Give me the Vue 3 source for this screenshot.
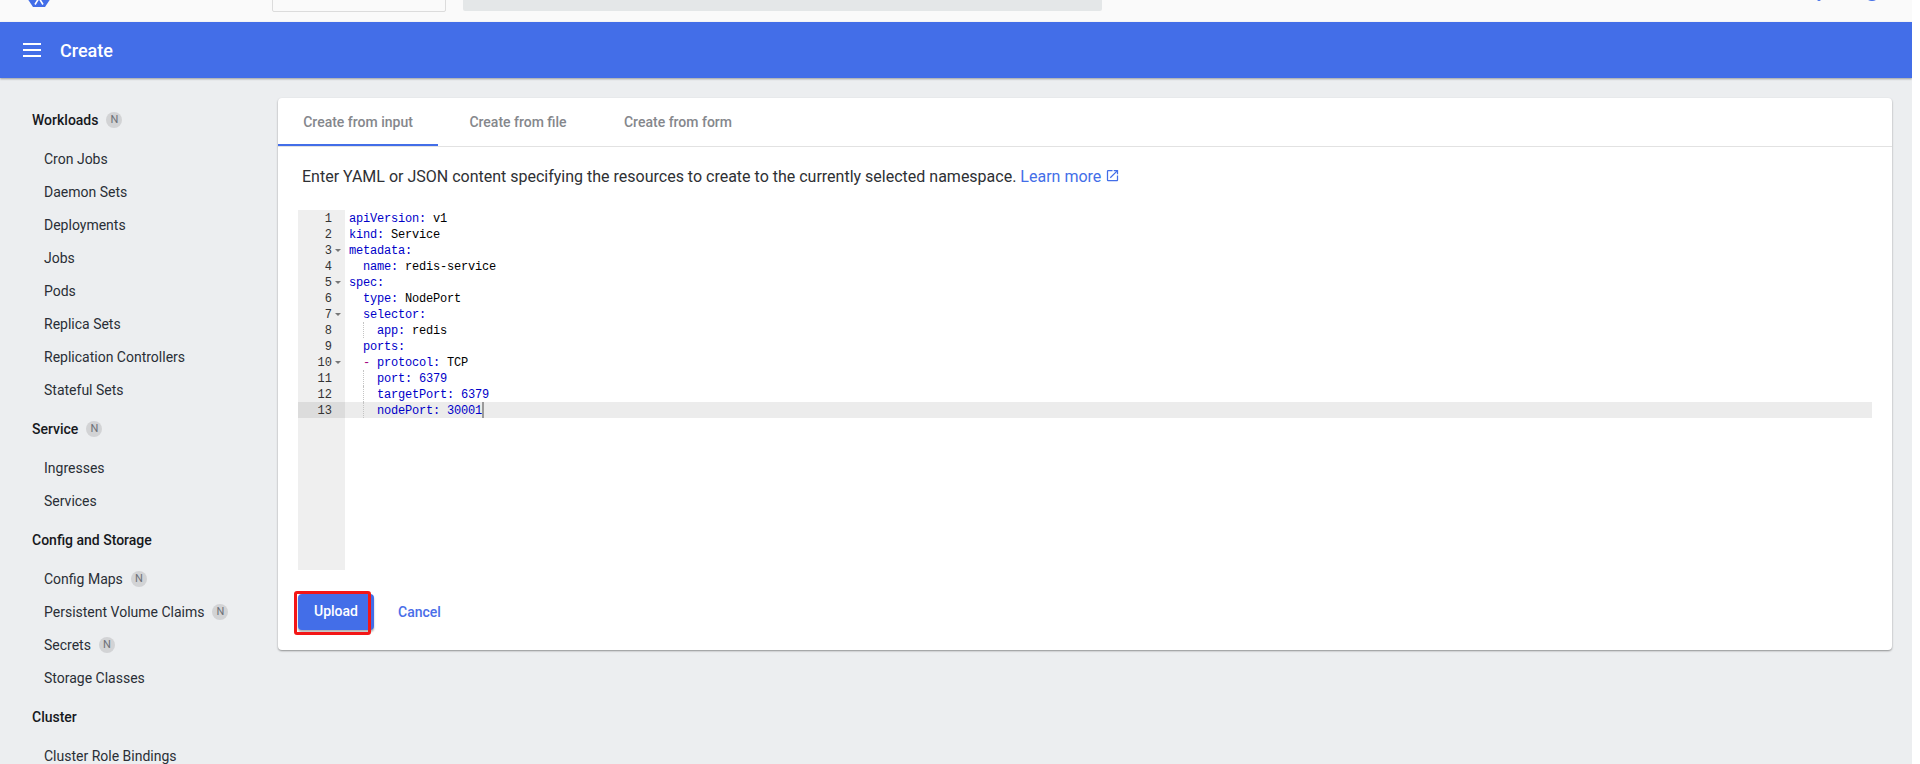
<script setup>
const groups = [
  { title: 'Workloads', badge: true, items: [
    { label: 'Cron Jobs' }, { label: 'Daemon Sets' }, { label: 'Deployments' }, { label: 'Jobs' },
    { label: 'Pods' }, { label: 'Replica Sets' }, { label: 'Replication Controllers' }, { label: 'Stateful Sets' }
  ] },
  { title: 'Service', badge: true, items: [{ label: 'Ingresses' }, { label: 'Services' }] },
  { title: 'Config and Storage', badge: false, items: [
    { label: 'Config Maps', badge: true }, { label: 'Persistent Volume Claims', badge: true },
    { label: 'Secrets', badge: true }, { label: 'Storage Classes' }
  ] },
  { title: 'Cluster', badge: false, items: [{ label: 'Cluster Role Bindings' }] }
]

const tabs = ['Create from input', 'Create from file', 'Create from form']

const lines = [
  { indent: '', key: 'apiVersion', value: 'v1' },
  { indent: '', key: 'kind', value: 'Service' },
  { indent: '', key: 'metadata', fold: true },
  { indent: '  ', key: 'name', value: 'redis-service' },
  { indent: '', key: 'spec', fold: true },
  { indent: '  ', key: 'type', value: 'NodePort' },
  { indent: '  ', key: 'selector', fold: true },
  { indent: '    ', key: 'app', value: 'redis', guide: true },
  { indent: '  ', key: 'ports' },
  { indent: '  ', dash: true, key: 'protocol', value: 'TCP', fold: true },
  { indent: '    ', key: 'port', num: '6379', guide: true },
  { indent: '    ', key: 'targetPort', num: '6379', guide: true },
  { indent: '    ', key: 'nodePort', num: '30001', guide: true, active: true }
]
</script>

<template>
  <div class="app">
    <div class="topbar">
      <svg class="logo" width="24" height="24" viewBox="0 0 24 24">
        <path d="M12 0 22 5 24 15 18 24H6L0 15 2 5Z" fill="#436ee8" />
        <path d="M8 21.500 12 15l4 6.500" fill="none" stroke="#fff" stroke-width="1.600" />
      </svg>
      <div class="search"></div>
      <div class="actionbar"></div>
      <div class="top-icons">
        <span class="dot"></span>
        <span class="avatar"></span>
      </div>
    </div>

    <header class="toolbar">
      <svg class="menu" width="18" height="14" viewBox="0 0 18 14">
        <path d="M0 1h18M0 7h18M0 13h18" stroke="#fff" stroke-width="2" />
      </svg>
      <span class="title">Create</span>
    </header>

    <div class="body">
      <nav class="sidebar">
        <section v-for="group in groups" :key="group.title" class="group">
          <div class="group-title">
            {{ group.title }}
            <span v-if="group.badge" class="badge">N</span>
          </div>
          <div v-for="item in group.items" :key="item.label" class="item">
            {{ item.label }}
            <span v-if="item.badge" class="badge">N</span>
          </div>
        </section>
      </nav>

      <main class="main">
        <div class="card">
          <div class="tabs">
            <div v-for="(tab, i) in tabs" :key="tab" class="tab" :class="{ on: i === 0 }">{{ tab }}</div>
          </div>
          <div class="content">
            <p class="desc">
              Enter YAML or JSON content specifying the resources to create to the currently selected namespace.
              <a class="learn">Learn more
                <svg width="15" height="15" viewBox="0 0 24 24"><path fill="#436ee8" d="M19 19H5V5h7V3H5a2 2 0 0 0-2 2v14a2 2 0 0 0 2 2h14c1.100 0 2-.9 2-2v-7h-2v7zM14 3v2h3.590l-9.830 9.830 1.410 1.410L19 6.410V10h2V3h-7z" /></svg>
              </a>
            </p>
            <div class="editor">
              <div class="gutter">
                <div v-for="(l, i) in lines" :key="i" class="gline" :class="{ active: l.active }">
                  <span>{{ i + 1 }}</span>
                  <i class="fold" :class="{ show: l.fold }"></i>
                </div>
              </div>
              <div class="code">
                <div v-for="(l, i) in lines" :key="i" class="cline" :class="{ active: l.active, guide: l.guide }"><span>{{ l.indent }}</span><span v-if="l.dash" class="dash">{{ '- ' }}</span><span class="key">{{ l.key }}:</span><span v-if="l.value">{{ ' ' + l.value }}</span><span v-if="l.num" class="key">{{ ' ' + l.num }}</span><i v-if="l.active" class="caret"></i></div>
              </div>
            </div>
            <div class="actions">
              <button class="upload">Upload<span class="mark"></span></button>
              <button class="cancel">Cancel</button>
            </div>
          </div>
        </div>
      </main>
    </div>
  </div>
</template>

<style>
html, body { background: #fff; overflow: hidden; }
</style>

<style scoped>
.app {
  width: 1912px;
  height: 764px;
  display: flex;
  flex-direction: column;
  overflow: hidden;
  background: #eceef0;
  font-family: Roboto, "Liberation Sans", sans-serif;
}
.topbar {
  height: 22px;
  flex: none;
  background: #fafafa;
  display: flex;
  align-items: flex-end;
  overflow: hidden;
}
.logo { flex: none; margin: 0 0 15px 27px; }
.search {
  flex: none;
  width: 174px;
  height: 48px;
  margin: 0 0 10px 221px;
  background: #fafafa;
  border: 1px solid #dcdcdc;
  border-radius: 2px;
  box-sizing: border-box;
}
.actionbar {
  flex: none;
  width: 639px;
  height: 48px;
  margin: 0 0 11px 17px;
  background: #e4e7e8;
  border-radius: 2px;
}
.top-icons {
  flex: none;
  display: flex;
  align-items: flex-end;
  margin: 0 0 21px 715px;
}
.dot { width: 4px; height: 4px; border-radius: 50%; background: #436ee8; }
.avatar { width: 16px; height: 16px; border-radius: 50%; background: #436ee8; margin-left: 43px; }
.toolbar {
  height: 56px;
  flex: none;
  display: flex;
  align-items: center;
  background: #436ee8;
  color: #fff;
  box-shadow: 0 1px 2px rgba(0, 0, 0, .35);
  position: relative;
  z-index: 1;
}
.menu { margin-left: 23px; }
.title { margin-left: 19px; font-size: 18px; font-weight: 500; }
.body { flex: 1; display: flex; min-height: 0; }
.sidebar { width: 278px; flex: none; padding-top: 25px; box-sizing: border-box; overflow: hidden; }
.group { margin-bottom: 6px; }
.group-title {
  height: 33px;
  display: flex;
  align-items: center;
  padding-left: 32px;
  margin-bottom: 6px;
  font-size: 14px;
  font-weight: 500;
  color: #16181c;
}
.item {
  height: 33px;
  display: flex;
  align-items: center;
  padding-left: 44px;
  font-size: 14px;
  color: #2a2e36;
}
.badge {
  width: 16px;
  height: 16px;
  margin-left: 8px;
  border-radius: 50%;
  background: #d2d3d5;
  color: #6d7078;
  font-size: 11px;
  font-weight: 400;
  display: flex;
  align-items: center;
  justify-content: center;
}
.main { flex: 1; padding: 20px 20px 0 0; min-width: 0; }
.card {
  background: #fff;
  border-radius: 4px;
  box-shadow: 0 1px 2px rgba(0, 0, 0, .4);
}
.tabs { display: flex; height: 49px; box-sizing: border-box; border-bottom: 1px solid #e2e2e2; }
.tab {
  min-width: 160px;
  height: 48px;
  display: flex;
  align-items: center;
  justify-content: center;
  box-sizing: border-box;
  font-size: 14px;
  font-weight: 500;
  color: #85878c;
}
.tab.on { border-bottom: 2px solid #436ee8; padding-top: 2px; }
.content { padding: 21px 20px 20px; }
.desc { margin: 0 0 24px 4px; height: 18px; font-size: 16px; line-height: 18px; color: #2e3034; }
.learn { color: #436ee8; }
.learn svg { vertical-align: -1px; margin-left: 0; }
.editor { display: flex; height: 360px; font-family: "Liberation Mono", monospace; font-size: 12px; line-height: 18px; letter-spacing: -.2px; }
.gutter { width: 47px; flex: none; background: #efefef; color: #333; }
.gline { height: 16px; display: flex; justify-content: flex-end; align-items: flex-start; padding-right: 4px; box-sizing: border-box; letter-spacing: 0; }
.gline.active { background: #dcdcdc; }
.fold { width: 9px; height: 16px; display: block; position: relative; }
.fold.show::after {
  content: "";
  position: absolute;
  left: 3px;
  top: 7px;
  border-left: 3px solid transparent;
  border-right: 3px solid transparent;
  border-top: 3px solid #777;
}
.code { flex: 1; min-width: 0; color: #000; }
.cline { height: 16px; padding-left: 4px; white-space: pre; position: relative; }
.cline.active { background: #ececec; }
.cline.guide::before {
  content: "";
  position: absolute;
  left: 18px;
  top: 0;
  bottom: 0;
  border-left: 1px dotted #c4c4c4;
}
.key { color: #0000c8; }
.dash { color: #a3007f; }
.caret { display: inline-block; width: 2px; height: 16px; background: #9a9a9a; vertical-align: top; }
.actions { display: flex; align-items: center; margin-top: 24px; height: 36px; }
button { border: 0; font: inherit; font-size: 14px; font-weight: 500; background: none; cursor: pointer; }
.upload {
  width: 76px;
  height: 36px;
  background: #436ee8;
  color: #fff;
  border-radius: 4px;
  position: relative;
  box-shadow: 0 2px 2px rgba(0, 0, 0, .3);
  padding: 0 0 2px;
}
.mark {
  position: absolute;
  left: -4px;
  top: -3px;
  width: 77px;
  height: 44px;
  box-sizing: border-box;
  border: 3px solid #f31616;
  border-radius: 3px;
}
.cancel { margin-left: 24px; color: #4a6ee8; padding: 0 0 1px; }
</style>
